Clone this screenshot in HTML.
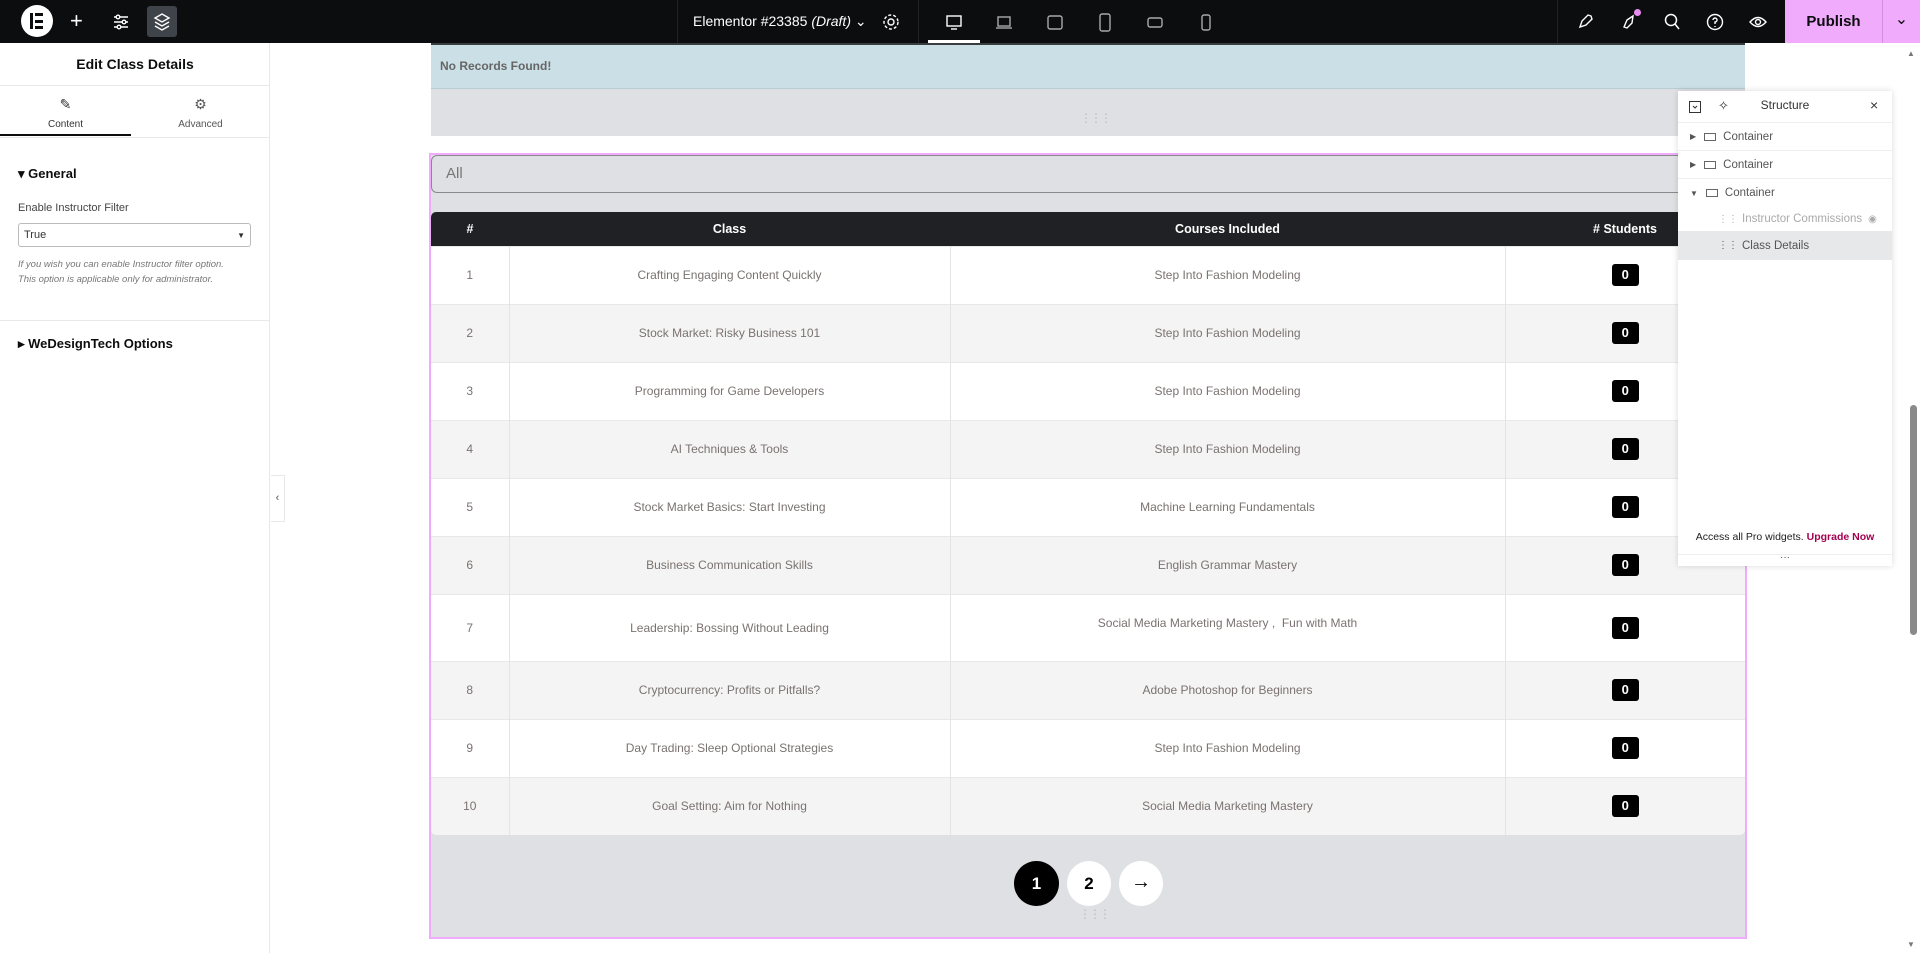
<!DOCTYPE html>
<html><head><meta charset="utf-8">
<style>
*{box-sizing:border-box;margin:0;padding:0}
body{width:1920px;height:953px;overflow:hidden;background:#fff;font-family:"Liberation Sans",sans-serif;position:relative;color:#333}
.abs{position:absolute}
#top{left:0;top:0;width:1920px;height:43px;background:#0c0d0e}
.ic{position:absolute;top:12px;width:20px;height:20px}
#left{left:0;top:43px;width:270px;height:910px;background:#fff;border-right:1px solid #e6e8ea}
table{border-collapse:collapse;width:1314px;table-layout:fixed}
th{background:#1f2124;color:#fff;font-size:12.5px;font-weight:bold;height:34px;text-align:center}
td{font-size:12px;color:#7a7270;text-align:center;border-right:1px solid #e4e4e4;border-top:1px solid #e8e8e8}
td:last-child{border-right:none}
tr.g td{background:#f4f4f4}
tr.w td{background:#fff}
.b{display:inline-block;background:#000;color:#fff;font-size:13px;font-weight:bold;width:27px;height:22px;line-height:22px;border-radius:3px}
.sr{position:absolute;left:0;width:214px;height:28px;font-size:11.5px;color:#555;display:flex;align-items:center;border-bottom:1px solid #eee}
</style></head><body>
<div id="top" class="abs">
 <div class="abs" style="left:21px;top:5px;width:32px;height:32px;border-radius:50%;background:#fff"></div>
 <div class="abs" style="left:30px;top:13px;width:3px;height:16px;background:#0c0d0e"></div>
 <div class="abs" style="left:35px;top:13px;width:8px;height:3px;background:#0c0d0e"></div>
 <div class="abs" style="left:35px;top:19.5px;width:8px;height:3px;background:#0c0d0e"></div>
 <div class="abs" style="left:35px;top:26px;width:8px;height:3px;background:#0c0d0e"></div>
 <div class="abs" style="left:70px;top:9px;color:#fff;font-size:22px;line-height:24px">+</div>
 <svg class="ic" style="left:111px" viewBox="0 0 20 20" stroke="#fff" fill="none" stroke-width="1.4"><path d="M3 5h14M3 10h14M3 15h14"/><circle cx="7" cy="5" r="1.8" fill="#0c0d0e"/><circle cx="13" cy="10" r="1.8" fill="#0c0d0e"/><circle cx="8" cy="15" r="1.8" fill="#0c0d0e"/></svg>
 <div class="abs" style="left:147px;top:6px;width:30px;height:31px;background:#3f444b;border-radius:3px"></div>
 <svg class="ic" style="left:152px" viewBox="0 0 20 20" stroke="#fff" fill="none" stroke-width="1.4"><path d="M10 2l7 4-7 4-7-4z M3 10l7 4 7-4 M3 14l7 4 7-4"/></svg>
 <div class="abs" style="left:677px;top:0;width:1px;height:43px;background:#222"></div>
 <div class="abs" style="left:693px;top:13px;color:#fff;font-size:14px">Elementor #23385 <i>(Draft)</i> &#8964;</div>
 <svg class="ic" style="left:881px" viewBox="0 0 20 20" stroke="#fff" fill="none" stroke-width="1.4"><circle cx="10" cy="10" r="3"/><circle cx="10" cy="10" r="7" stroke-dasharray="3 2"/></svg>
 <div class="abs" style="left:918px;top:0;width:1px;height:43px;background:#222"></div>
 <svg class="ic" style="left:944px" viewBox="0 0 20 20" stroke="#fff" fill="none" stroke-width="1.4"><rect x="3" y="4" width="14" height="10"/><path d="M7 17h6"/></svg>
 <div class="abs" style="left:928px;top:40px;width:52px;height:3px;background:#fff"></div>
 <svg class="ic" style="left:994px" viewBox="0 0 20 20" stroke="#aaa" fill="none" stroke-width="1.4"><rect x="4" y="5" width="12" height="9"/><path d="M2 16h16"/></svg>
 <svg class="ic" style="left:1045px" viewBox="0 0 20 20" stroke="#aaa" fill="none" stroke-width="1.4"><rect x="3" y="4" width="14" height="13" rx="2"/></svg>
 <svg class="ic" style="left:1095px" viewBox="0 0 20 20" stroke="#aaa" fill="none" stroke-width="1.4"><rect x="5" y="2" width="10" height="17" rx="2"/></svg>
 <svg class="ic" style="left:1145px" viewBox="0 0 20 20" stroke="#aaa" fill="none" stroke-width="1.4"><rect x="3" y="6" width="14" height="9" rx="2"/></svg>
 <svg class="ic" style="left:1196px" viewBox="0 0 20 20" stroke="#aaa" fill="none" stroke-width="1.4"><rect x="6" y="3" width="8" height="15" rx="2"/></svg>
 <div class="abs" style="left:1557px;top:0;width:1px;height:43px;background:#222"></div>
 <svg class="ic" style="left:1575px" viewBox="0 0 20 20" stroke="#fff" fill="none" stroke-width="1.4"><path d="M5 15l2-6 6-6 3 1 1 3-6 6z M5 15l3-1"/></svg>
 <svg class="ic" style="left:1620px" viewBox="0 0 20 20" stroke="#fff" fill="none" stroke-width="1.4"><path d="M4 15l3-7 6-4-1 7-5 5z"/></svg>
 <div class="abs" style="left:1634px;top:9px;width:7px;height:7px;border-radius:50%;background:#e98cf0"></div>
 <svg class="ic" style="left:1662px" viewBox="0 0 20 20" stroke="#fff" fill="none" stroke-width="1.5"><circle cx="9" cy="8" r="5.5"/><path d="M13 12l4 5"/></svg>
 <svg class="ic" style="left:1705px" viewBox="0 0 20 20" stroke="#fff" fill="none" stroke-width="1.4"><circle cx="10" cy="10" r="7.5"/><path d="M8 8a2 2 0 1 1 2 2v2M10 14v1"/></svg>
 <svg class="ic" style="left:1748px" viewBox="0 0 20 20" stroke="#fff" fill="none" stroke-width="1.4"><path d="M2 10q8-9 16 0q-8 9-16 0z"/><circle cx="10" cy="10" r="2.5"/></svg>
 <div class="abs" style="left:1785px;top:0;width:97px;height:43px;background:#f0abfc;color:#0c0d0e;font-size:15px;font-weight:bold;text-align:center;line-height:43px">Publish</div>
 <div class="abs" style="left:1882px;top:0;width:38px;height:43px;background:#f0abfc;border-left:1px solid #d58ee0;color:#0c0d0e;text-align:center;line-height:40px;font-size:16px">&#8964;</div>
</div>

<div id="left" class="abs">
 <div class="abs" style="left:0;top:13px;width:270px;text-align:center;font-weight:bold;font-size:14px;color:#0c0d0e">Edit Class Details</div>
 <div class="abs" style="left:0;top:42px;width:270px;height:1px;background:#e6e8ea"></div>
 <div class="abs" style="left:0;top:53px;width:131px;text-align:center;font-size:14px">&#9998;</div>
 <div class="abs" style="left:0;top:76px;width:131px;text-align:center;font-size:10px;color:#333">Content</div>
 <div class="abs" style="left:0;top:91px;width:131px;height:2px;background:#0c0d0e"></div>
 <div class="abs" style="left:131px;top:53px;width:139px;text-align:center;font-size:14px;color:#555">&#9881;</div>
 <div class="abs" style="left:131px;top:76px;width:139px;text-align:center;font-size:10px;color:#555">Advanced</div>
 <div class="abs" style="left:0;top:94px;width:270px;height:1px;background:#e6e8ea"></div>
 <div class="abs" style="left:18px;top:123px;font-size:13px;font-weight:bold;color:#0c0d0e">&#9662; General</div>
 <div class="abs" style="left:18px;top:159px;font-size:11px;color:#444">Enable Instructor Filter</div>
 <div class="abs" style="left:18px;top:180px;width:233px;height:24px;border:1px solid #bbb;border-radius:3px;font-size:11px;padding:5px 5px;color:#333">True<span style="float:right;font-size:8px;margin-top:2px">&#9660;</span></div>
 <div class="abs" style="left:18px;top:214px;font-size:9.5px;font-style:italic;color:#777;line-height:15px">If you wish you can enable Instructor filter option.<br>This option is applicable only for administrator.</div>
 <div class="abs" style="left:0;top:277px;width:270px;height:1px;background:#e6e8ea"></div>
 <div class="abs" style="left:18px;top:293px;font-size:13px;font-weight:bold;color:#0c0d0e">&#9656; WeDesignTech Options</div>
</div>
<div class="abs" style="left:271px;top:475px;width:14px;height:47px;background:#fff;border:1px solid #e6e8ea;border-left:none;font-size:11px;color:#555;text-align:center;line-height:45px">&#8249;</div>

<!-- canvas -->
<div class="abs" style="left:431px;top:43px;width:1314px;height:3px;background:#3a3d40"></div>
<div class="abs" style="left:431px;top:45px;width:1314px;height:44px;background:#cbdfe6;border-bottom:1px solid #b8ccd3"></div>
<div class="abs" style="left:440px;top:59px;font-size:12px;font-weight:bold;color:#666">No Records Found!</div>
<div class="abs" style="left:431px;top:89px;width:1314px;height:47px;background:#dfe0e3"></div>
<div class="abs" style="left:1080px;top:111px;color:#bbb;font-size:12px;letter-spacing:-2px">&#8942;&#8942;&#8942;</div>

<div class="abs" style="left:429px;top:153px;width:1318px;height:786px;background:#dfe0e3;border:2px solid #f0abfc"></div>
<div class="abs" style="left:431px;top:155px;width:1320px;height:38px;border:1px solid #8a8a8a;border-radius:6px;background:#dfe0e3;font-size:15px;color:#777;padding:9px 14px">All</div>
<div class="abs" style="left:431px;top:212px;width:1314px;border-radius:5px;overflow:hidden">
<table>
<colgroup><col style="width:78px"><col style="width:441px"><col style="width:555px"><col style="width:240px"></colgroup>
<tr><th>#</th><th>Class</th><th>Courses Included</th><th># Students</th></tr>
<tr class="w" style="height:58px"><td>1</td><td>Crafting Engaging Content Quickly</td><td>Step Into Fashion Modeling</td><td><span class="b">0</span></td></tr>
<tr class="g" style="height:58px"><td>2</td><td>Stock Market: Risky Business 101</td><td>Step Into Fashion Modeling</td><td><span class="b">0</span></td></tr>
<tr class="w" style="height:58px"><td>3</td><td>Programming for Game Developers</td><td>Step Into Fashion Modeling</td><td><span class="b">0</span></td></tr>
<tr class="g" style="height:58px"><td>4</td><td>AI Techniques &amp; Tools</td><td>Step Into Fashion Modeling</td><td><span class="b">0</span></td></tr>
<tr class="w" style="height:58px"><td>5</td><td>Stock Market Basics: Start Investing</td><td>Machine Learning Fundamentals</td><td><span class="b">0</span></td></tr>
<tr class="g" style="height:58px"><td>6</td><td>Business Communication Skills</td><td>English Grammar Mastery</td><td><span class="b">0</span></td></tr>
<tr class="w" style="height:67px"><td>7</td><td>Leadership: Bossing Without Leading</td><td style="vertical-align:top;padding-top:21px">Social Media Marketing Mastery ,&nbsp; Fun with Math</td><td><span class="b">0</span></td></tr>
<tr class="g" style="height:58px"><td>8</td><td>Cryptocurrency: Profits or Pitfalls?</td><td>Adobe Photoshop for Beginners</td><td><span class="b">0</span></td></tr>
<tr class="w" style="height:58px"><td>9</td><td>Day Trading: Sleep Optional Strategies</td><td>Step Into Fashion Modeling</td><td><span class="b">0</span></td></tr>
<tr class="g" style="height:58px"><td>10</td><td>Goal Setting: Aim for Nothing</td><td>Social Media Marketing Mastery</td><td><span class="b">0</span></td></tr>
</table></div>

<div class="abs" style="left:1014px;top:861px;width:45px;height:45px;border-radius:50%;background:#000;color:#fff;font-weight:bold;font-size:17px;text-align:center;line-height:45px">1</div>
<div class="abs" style="left:1067px;top:861px;width:44px;height:45px;border-radius:50%;background:#fff;color:#000;font-weight:bold;font-size:17px;text-align:center;line-height:45px">2</div>
<div class="abs" style="left:1119px;top:861px;width:44px;height:45px;border-radius:50%;background:#fff;color:#000;font-size:20px;text-align:center;line-height:43px">&#8594;</div>
<div class="abs" style="left:1079px;top:907px;color:#bbb;font-size:12px;letter-spacing:-2px">&#8942;&#8942;&#8942;</div>

<!-- structure panel -->
<div class="abs" style="left:1678px;top:91px;width:214px;height:475px;background:#fff;box-shadow:0 0 6px rgba(0,0,0,.15)">
 <svg class="abs" style="left:10px;top:9px" width="14" height="14" viewBox="0 0 14 14" stroke="#333" fill="none"><rect x="1.5" y="1.5" width="11" height="11"/><path d="M5 6l2 2 2-2" /></svg>
 <div class="abs" style="left:40px;top:7px;font-size:13px;color:#333">&#10023;</div>
 <div class="abs" style="left:0;top:7px;width:214px;text-align:center;font-size:12px;color:#333">Structure</div>
 <div class="abs" style="left:192px;top:6px;font-size:14px;color:#333">&#215;</div>
 <div class="abs" style="left:0;top:31px;width:214px;height:1px;background:#eee"></div>
 <div class="sr" style="top:32px"><span style="margin-left:12px;font-size:8px">&#9654;</span><span style="margin-left:8px;display:inline-block;width:12px;height:8px;border:1px solid #666"></span><span style="margin-left:7px">Container</span></div>
 <div class="sr" style="top:60px"><span style="margin-left:12px;font-size:8px">&#9654;</span><span style="margin-left:8px;display:inline-block;width:12px;height:8px;border:1px solid #666"></span><span style="margin-left:7px">Container</span></div>
 <div class="sr" style="top:88px;border:none"><span style="margin-left:12px;font-size:8px">&#9660;</span><span style="margin-left:8px;display:inline-block;width:12px;height:8px;border:1px solid #666"></span><span style="margin-left:7px">Container</span></div>
 <div class="sr" style="top:114px;border:none;color:#aaa"><span style="margin-left:40px;font-size:10px">&#8942;&#8942;</span><span style="margin-left:4px">Instructor Commissions</span><span style="margin-left:6px;font-size:10px">&#9673;</span></div>
 <div class="sr" style="top:140px;border:none;background:#e6e8ea;height:29px"><span style="margin-left:40px;font-size:10px">&#8942;&#8942;</span><span style="margin-left:4px">Class Details</span></div>
 <div class="abs" style="left:0;top:440px;width:214px;text-align:center;font-size:10.5px;color:#222">Access all Pro widgets. <b style="color:#a4004f">Upgrade Now</b></div>
 <div class="abs" style="left:0;top:463px;width:214px;height:1px;background:#eee"></div>
 <div class="abs" style="left:0;top:461px;width:214px;text-align:center;font-size:10px;color:#555">···</div>
</div>

<!-- scrollbar -->
<div class="abs" style="left:1903px;top:43px;width:17px;height:910px;background:#fff"></div>
<div class="abs" style="left:1907px;top:49px;font-size:8px;color:#777">&#9650;</div>
<div class="abs" style="left:1910px;top:405px;width:7px;height:230px;background:#8a8a8a;border-radius:4px"></div>
<div class="abs" style="left:1907px;top:940px;font-size:8px;color:#777">&#9660;</div>
</body></html>
